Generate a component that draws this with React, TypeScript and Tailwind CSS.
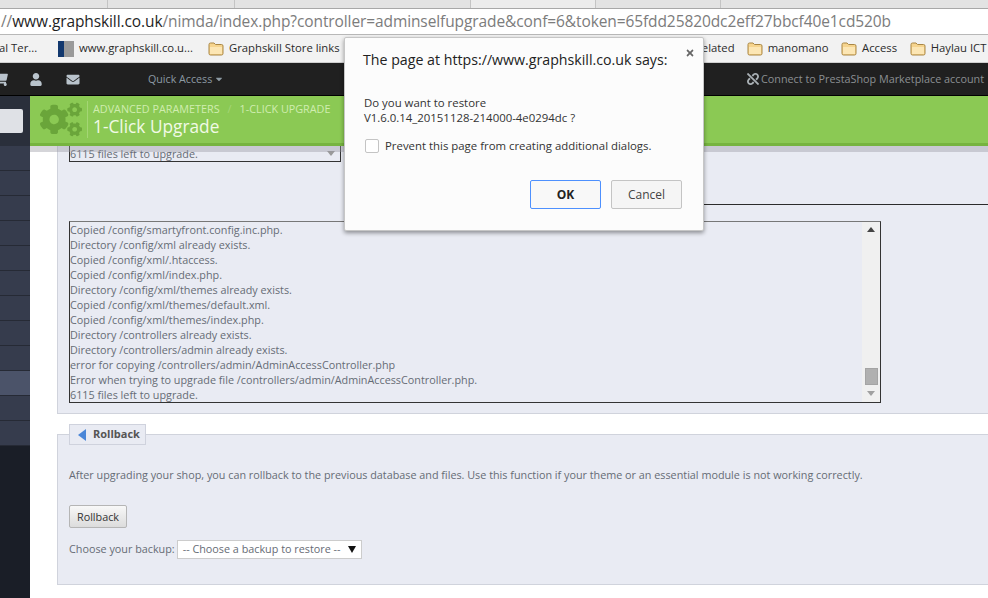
import { FaCaretDown, FaCogs, FaEnvelope, FaShoppingCart, FaTimes, FaUnlink, FaUser } from "react-icons/fa";

const logLines = [
  "Copied /config/smartyfront.config.inc.php.",
  "Directory /config/xml already exists.",
  "Copied /config/xml/.htaccess.",
  "Copied /config/xml/index.php.",
  "Directory /config/xml/themes already exists.",
  "Copied /config/xml/themes/default.xml.",
  "Copied /config/xml/themes/index.php.",
  "Directory /controllers already exists.",
  "Directory /controllers/admin already exists.",
  "error for copying /controllers/admin/AdminAccessController.php",
  "Error when trying to upgrade file /controllers/admin/AdminAccessController.php.",
  "6115 files left to upgrade.",
];

function Folder() {
  return (
    <svg width="16" height="14" viewBox="0 0 16 14" className="shrink-0">
      <path d="M1 2.5 Q1 1 2.5 1 H6 L7.5 2.5 H13.5 Q15 2.5 15 4 V11.5 Q15 13 13.5 13 H2.5 Q1 13 1 11.5 Z" fill="#f6d48e" stroke="#a98645" strokeWidth="1" />
      <path d="M2 5 H14 V11.5 Q14 12 13.5 12 H2.5 Q2 12 2 11.5 Z" fill="#fce6b4" />
    </svg>
  );
}

function Bookmark({ label }: { label: string }) {
  return (
    <div className="flex items-center gap-[5px] shrink-0">
      <Folder />
      <span>{label}</span>
    </div>
  );
}

function BrowserChrome() {
  return (
    <div className="shrink-0 font-['Open_Sans',sans-serif]">
      {/* Tab strip, mostly cropped away */}
      <div className="h-[9px] bg-[#e3e3e3] border-b border-[#a8a8a8] flex overflow-hidden">
        <div className="w-[108px] border-r border-[#c4c4c4]" />
        <div className="w-[127px] border-r border-[#c4c4c4]" />
        <div className="w-[236px] border-r border-[#c4c4c4]" />
        <div className="w-[125px] border-r border-[#c4c4c4] bg-[#ececec]" />
        <div className="w-[125px] border-r border-[#c4c4c4]" />
      </div>
      <div className="h-[26px] bg-white border-b border-[#b8b8b8] pl-[1px] text-[15.5px] tracking-[-0.1px] leading-[24px] text-[#7c7c7c] whitespace-nowrap overflow-hidden">
        //<span className="text-[#1f1f1f]">www.graphskill.co.uk</span>/nimda/index.php?controller=adminselfupgrade&amp;conf=6&amp;token=65fdd25820dc2eff27bbcf40e1cd520b
      </div>
      <div className="h-[28px] bg-[#f2f2f2] border-b border-[#cfcfcf] flex items-center text-[11.3px] text-[#2a2a2a] whitespace-nowrap overflow-hidden">
        <span className="-ml-[1px] w-[59px] shrink-0">al Ter...</span>
        <div className="w-[16px] h-[16px] shrink-0 flex">
          <div className="w-[6px] bg-[#12386e]" />
          <div className="flex-1 bg-[#9a9a9a]" />
        </div>
        <span className="ml-[5px] w-[129px] shrink-0">www.graphskill.co.u...</span>
        <Bookmark label="Graphskill Store links" />
        <span className="ml-[347px] w-[48px] shrink-0 text-right">elated</span>
        <div className="ml-[12px] flex gap-[12.5px]">
          <Bookmark label="manomano" />
          <Bookmark label="Access" />
          <Bookmark label="Haylau ICT" />
        </div>
      </div>
    </div>
  );
}

function TopBar() {
  return (
    <div className="h-[33px] shrink-0 bg-[#202020] border-b border-black flex items-center text-[10.7px] text-[#8d9aa3] whitespace-nowrap overflow-hidden font-['Open_Sans',sans-serif]">
      <FaShoppingCart className="-ml-[8px] w-[16px] h-[14px] text-[#b9c3cc] shrink-0" />
      <FaUser className="ml-[22px] w-[12px] h-[13px] text-[#b9c3cc] shrink-0" />
      <FaEnvelope className="ml-[24px] w-[14px] h-[13px] text-[#b9c3cc] shrink-0" />
      <span className="ml-[68px]">Quick Access</span>
      <FaCaretDown className="ml-[2px] w-[10px] h-[10px]" />
      <div className="ml-auto mr-[4px] flex items-center gap-[2px] text-[#8b8f92]">
        <FaUnlink className="w-[12px] h-[12px] text-[#a9b0b5]" />
        <span className="text-[10.8px]">Connect to PrestaShop Marketplace account</span>
      </div>
    </div>
  );
}

function Sidebar() {
  return (
    <div className="w-[30px] shrink-0 bg-[#1a1e27] flex flex-col">
      <div className="h-[50px] bg-[#2a2f3b] pt-[13px]">
        <div className="w-[23px] h-[24px] bg-[#dfe1e6] rounded-r-[2px]" />
      </div>
      {Array.from({ length: 12 }).map((_, i) => (
        <div key={i} className={`h-[25px] border-b border-[#262a35] ${i === 9 ? "bg-[#4b5369]" : "bg-[#363c4d]"}`} />
      ))}
    </div>
  );
}

function PageHead() {
  return (
    <div className="relative z-10 h-[50px] shrink-0 bg-[#8bc954] border-b-[3px] border-[#76b43f] shadow-[0_6px_0_rgba(150,150,160,0.4)] flex items-center pl-[10px]">
      <FaCogs className="w-[42px] h-[37px] text-[#6aa53a] shrink-0" />
      <div className="ml-[5px] h-[37px] border-l border-[#a4d675] pl-[5px] flex flex-col font-['Open_Sans',sans-serif]">
        <div className="text-[10.8px] leading-[14px] mt-[1px] text-[#d0edb0] flex whitespace-nowrap">
          <span>ADVANCED PARAMETERS</span>
          <span className="ml-[8px] w-[12px] text-[#a6d678]">/</span>
          <span>1-CLICK UPGRADE</span>
        </div>
        <div className="text-[17.3px] leading-[22px] text-[#f1fae6] whitespace-nowrap">1-Click Upgrade</div>
      </div>
    </div>
  );
}

function UpgradePanel() {
  return (
    <div className="ml-[27px] -mr-[4px] h-[268px] shrink-0 bg-[#e9ebf3] border-x border-b border-[#d0d3dc] pl-[11px] flex flex-col">
      <div className="w-[272px] h-[16px] shrink-0 border-x border-b border-[#333] flex items-center justify-between pr-[4px]">
        <span className="leading-[15px]">6115 files left to upgrade.</span>
        <svg width="10" height="6" viewBox="0 0 10 6"><path d="M1 0 H9 L5 5 Z" fill="#9a9a9a" /></svg>
      </div>
      <div className="mt-[42px] ml-[280px] border-t border-[#2b2b2b]" />
      <div className="mt-[16px] w-[812px] h-[182px] shrink-0 border border-[#333] border-t-[#777] flex">
        <div className="flex-1 leading-[15px] whitespace-nowrap">
          {logLines.map((line) => (
            <div key={line}>{line}</div>
          ))}
        </div>
        <div className="w-[18px] bg-[#f0f0f0] flex flex-col items-center justify-between pt-[5px] pb-[6px]">
          <svg width="8" height="5" viewBox="0 0 8 5"><path d="M4 0 L8 5 H0 Z" fill="#444" /></svg>
          <div className="flex flex-col items-center gap-[6px] mt-auto">
            <div className="w-[13px] h-[17px] bg-[#b0b0b0] border border-[#a4a4a4]" />
            <svg width="8" height="5" viewBox="0 0 8 5"><path d="M0 0 H8 L4 5 Z" fill="#a0a0a0" /></svg>
          </div>
        </div>
      </div>
    </div>
  );
}

function RollbackPanel() {
  return (
    <div className="mt-[20px] ml-[27px] -mr-[4px] h-[151px] shrink-0 bg-[#e9ebf3] border border-[#d0d3dc] pl-[11px]">
      <div className="-mt-[11px] w-[77px] h-[21px] bg-[#e9ebf3] border border-[#cfd2dd] flex items-center pl-[8px] gap-[7px] text-[11px] font-bold text-[#555]">
        <svg width="8" height="12" viewBox="0 0 8 12"><path d="M8 0 V12 L0 6 Z" fill="#4a86d8" /></svg>
        <span>Rollback</span>
      </div>
      <p className="mt-[22px] leading-[15px]">After upgrading your shop, you can rollback to the previous database and files. Use this function if your theme or an essential module is not working correctly.</p>
      <button className="mt-[23px] block w-[58px] h-[23px] pt-[2px] rounded-[2px] border border-[#b5b5b5] bg-linear-to-b from-[#f8f8f8] to-[#dcdcdc] text-[#333]">Rollback</button>
      <div className="mt-[12px] flex items-center">
        <span>Choose your backup:</span>
        <div className="ml-[2px] w-[185px] h-[19px] bg-white border border-[#ccc] flex items-center pl-[5px] pr-[5px] justify-between">
          <span>-- Choose a backup to restore --</span>
          <svg width="8" height="7" viewBox="0 0 8 7"><path d="M0 0 H8 L4 7 Z" fill="#111" /></svg>
        </div>
      </div>
    </div>
  );
}

function ConfirmDialog() {
  return (
    <div className="absolute z-20 left-[344px] top-[37px] w-[360px] h-[194px] bg-[#fcfcfc] rounded-[2px] border border-[#c6c6c6] shadow-[0_2px_4px_rgba(0,0,0,0.4)] pl-[18px] font-['Open_Sans',sans-serif] text-[#333]">
      <FaTimes className="absolute right-[8px] top-[10px] w-[10px] h-[10px] text-[#666]" />
      <div className="mt-[11px] text-[14.2px] leading-[22px] text-[#222] whitespace-nowrap">The page at https://www.graphskill.co.uk says:</div>
      <div className="mt-[24px] ml-[1px] text-[11.4px] leading-[15px] text-[#333] whitespace-nowrap">
        <div>Do you want to restore</div>
        <div>V1.6.0.14_20151128-214000-4e0294dc ?</div>
      </div>
      <div className="mt-[12px] flex items-center gap-[6px] text-[11.4px] whitespace-nowrap">
        <div className="w-[14px] h-[14px] ml-[2px] bg-white border border-[#c4c4c4] rounded-[2px]" />
        <span>Prevent this page from creating additional dialogs.</span>
      </div>
      <div className="mt-[26px] mr-[21px] flex justify-end gap-[10px] text-[12px]">
        <button className="w-[71px] h-[29px] rounded-[2px] border border-[#4d90fe] bg-[#f8f8f8] font-bold text-[#222]">OK</button>
        <button className="w-[71px] h-[29px] rounded-[2px] border border-[#c4c4c4] bg-[#f5f5f5] text-[#444]">Cancel</button>
      </div>
    </div>
  );
}

export default function App() {
  return (
    <div className="relative w-[988px] h-[598px] overflow-hidden bg-white flex flex-col">
      <BrowserChrome />
      <TopBar />
      <div className="flex flex-1 min-h-0">
        <Sidebar />
        <div className="flex-1 min-w-0 flex flex-col font-['Open_Sans',sans-serif] text-[10.8px] text-[#666b75]">
          <PageHead />
          <UpgradePanel />
          <RollbackPanel />
        </div>
      </div>
      <ConfirmDialog />
    </div>
  );
}
